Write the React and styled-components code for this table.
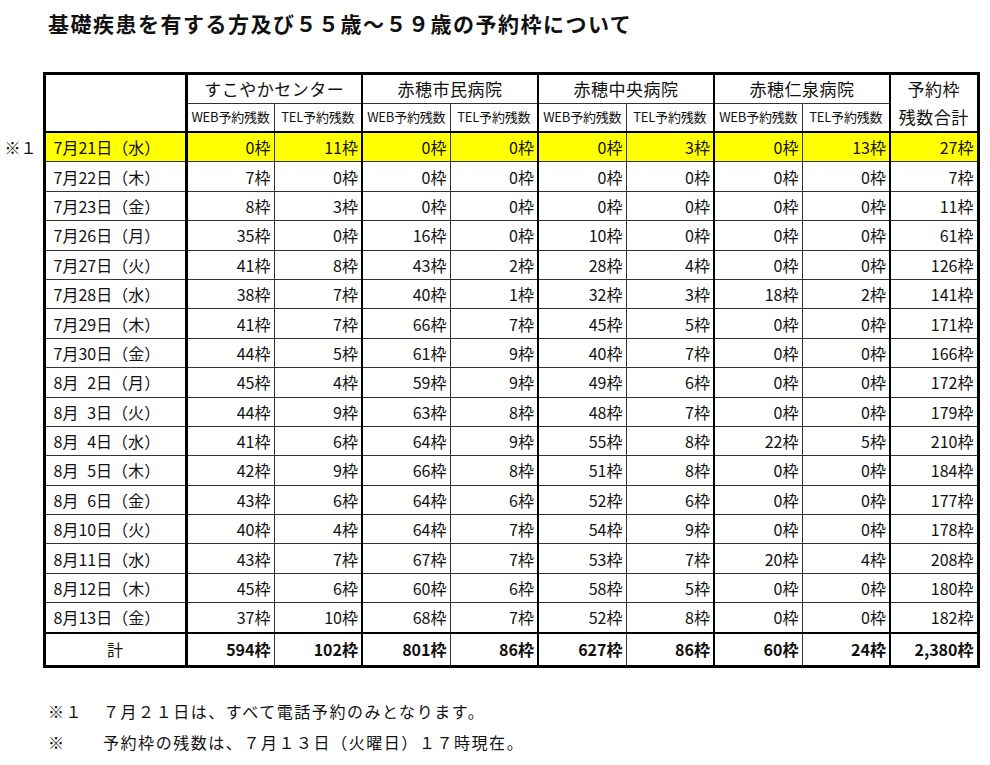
import React from "react";
import styled, { createGlobalStyle } from "styled-components";

const GlobalStyle = createGlobalStyle`
  body {
    margin: 0;
    background: #ffffff;
    color: #111;
    font-family: "Noto Sans CJK JP", "Noto Sans", sans-serif;
  }
`;

const Page = styled.div`
  width: 990px;
  height: 765px;
  padding-top: 11px;
  box-sizing: border-box;
`;

const Title = styled.h1`
  margin: 0 0 36px 48px;
  font-size: 21px;
  line-height: 25px;
  font-weight: 700;
  letter-spacing: 1.5px;
`;

const Table = styled.table`
  border-collapse: collapse;
  table-layout: fixed;
  width: 979px;
`;

const Marker = styled.td`
  border: none;
  font-size: 16px;
  text-align: right;
  padding: 0 6px 0 0;
  white-space: nowrap;
`;

const line = (w) => (w === 1 ? "1px solid #333" : `${w}px solid #000`);

const Cell = styled.td`
  height: ${(p) => p.$h || 28.4}px;
  padding: 0;
  line-height: 20px;
  border-top: ${(p) => line(p.$top || 1)};
  border-bottom: ${(p) => line(p.$bottom || 1)};
  border-left: ${(p) => line(p.$left || 1)};
  border-right: ${(p) => line(p.$right || 1)};
  background: ${(p) => (p.$hl ? "#ffff00" : "#fff")};
  white-space: nowrap;
  overflow: hidden;
`;

const HeadName = styled(Cell)`
  font-size: 17px;
  text-align: center;
  letter-spacing: 0.5px;
`;

const SubHead = styled(Cell)`
  font-size: 13px;
  text-align: center;
  letter-spacing: -0.2px;
`;

const TotalHead = styled(Cell)`
  font-size: 17px;
  line-height: 28px;
  text-align: center;
  letter-spacing: 0.5px;
`;

const DateCell = styled(Cell)`
  font-size: 16px;
  text-align: ${(p) => (p.$center ? "center" : "left")};
  padding-left: ${(p) => (p.$center ? 0 : 8)}px;
`;

const Num = styled(Cell)`
  font-size: 16px;
  text-align: right;
  padding-right: 3px;
  font-weight: ${(p) => (p.$bold ? 700 : 400)};
`;

const Pad = styled.span`
  display: inline-block;
  width: 0.55em;
`;

const Notes = styled.div`
  margin: 28px 0 0 48px;
  font-size: 16px;
  line-height: 31px;
  letter-spacing: 1.55px;
`;

const NoteLine = styled.div`
  display: flex;
`;

const NoteMark = styled.span`
  width: 55px;
  flex-shrink: 0;
`;

const hospitals = ["すこやかセンター", "赤穂市民病院", "赤穂中央病院", "赤穂仁泉病院"];

const rows = [
  ["7", "21", "水", [0, 11, 0, 0, 0, 3, 0, 13, 27]],
  ["7", "22", "木", [7, 0, 0, 0, 0, 0, 0, 0, 7]],
  ["7", "23", "金", [8, 3, 0, 0, 0, 0, 0, 0, 11]],
  ["7", "26", "月", [35, 0, 16, 0, 10, 0, 0, 0, 61]],
  ["7", "27", "火", [41, 8, 43, 2, 28, 4, 0, 0, 126]],
  ["7", "28", "水", [38, 7, 40, 1, 32, 3, 18, 2, 141]],
  ["7", "29", "木", [41, 7, 66, 7, 45, 5, 0, 0, 171]],
  ["7", "30", "金", [44, 5, 61, 9, 40, 7, 0, 0, 166]],
  ["8", "2", "月", [45, 4, 59, 9, 49, 6, 0, 0, 172]],
  ["8", "3", "火", [44, 9, 63, 8, 48, 7, 0, 0, 179]],
  ["8", "4", "水", [41, 6, 64, 9, 55, 8, 22, 5, 210]],
  ["8", "5", "木", [42, 9, 66, 8, 51, 8, 0, 0, 184]],
  ["8", "6", "金", [43, 6, 64, 6, 52, 6, 0, 0, 177]],
  ["8", "10", "火", [40, 4, 64, 7, 54, 9, 0, 0, 178]],
  ["8", "11", "水", [43, 7, 67, 7, 53, 7, 20, 4, 208]],
  ["8", "12", "木", [45, 6, 60, 6, 58, 5, 0, 0, 180]],
  ["8", "13", "金", [37, 10, 68, 7, 52, 8, 0, 0, 182]],
];

const totals = ["594", "102", "801", "86", "627", "86", "60", "24", "2,380"];

// border-left width for data column i (0..8)
const colLeft = (i) => (i === 0 ? 3 : i % 2 === 0 ? 2 : 1);
const colRight = (i) => (i === 8 ? 3 : undefined);

export default function App() {
  return (
    <Page>
      <GlobalStyle />
      <Title>基礎疾患を有する方及び５５歳～５９歳の予約枠について</Title>
      <Table>
        <colgroup>
          <col style={{ width: 44 }} />
          <col style={{ width: 142 }} />
          {Array.from({ length: 9 }).map((_, i) => (
            <col key={i} style={{ width: 88 }} />
          ))}
        </colgroup>
        <thead>
          <tr>
            <Marker rowSpan={2} />
            <DateCell rowSpan={2} $top={3} $left={3} $right={3} $bottom={2} $h={26} />
            {hospitals.map((h, i) => (
              <HeadName key={h} colSpan={2} $top={3} $left={i === 0 ? 3 : 2} $right={2} $h={26}>
                {h}
              </HeadName>
            ))}
            <TotalHead rowSpan={2} $top={3} $left={2} $right={3} $bottom={2} $h={52}>
              予約枠
              <br />
              残数合計
            </TotalHead>
          </tr>
          <tr>
            {hospitals.map((h, i) => (
              <React.Fragment key={h}>
                <SubHead $left={colLeft(i * 2)} $bottom={2} $h={26}>
                  WEB予約残数
                </SubHead>
                <SubHead $left={1} $bottom={2} $h={26}>
                  TEL予約残数
                </SubHead>
              </React.Fragment>
            ))}
          </tr>
        </thead>
        <tbody>
          {rows.map(([m, d, w, vals], r) => {
            const hl = r === 0;
            return (
              <tr key={m + d}>
                <Marker>{hl ? "※１" : ""}</Marker>
                <DateCell $hl={hl} $left={3} $right={3} $top={r === 0 ? 2 : 1}>
                  {m}月{d.length === 1 && <Pad />}
                  {d}日（{w}）
                </DateCell>
                {vals.map((v, i) => (
                  <Num key={i} $hl={hl} $left={colLeft(i)} $right={colRight(i)} $top={r === 0 ? 2 : 1}>
                    {v}枠
                  </Num>
                ))}
              </tr>
            );
          })}
          <tr>
            <Marker />
            <DateCell $center $left={3} $right={3} $top={2} $bottom={3} $h={31}>
              計
            </DateCell>
            {totals.map((v, i) => (
              <Num key={i} $bold $left={colLeft(i)} $right={colRight(i)} $top={2} $bottom={3} $h={31}>
                {v}枠
              </Num>
            ))}
          </tr>
        </tbody>
      </Table>
      <Notes>
        <NoteLine>
          <NoteMark>※１</NoteMark>
          <span>７月２１日は、すべて電話予約のみとなります。</span>
        </NoteLine>
        <NoteLine>
          <NoteMark>※</NoteMark>
          <span>予約枠の残数は、７月１３日（火曜日）１７時現在。</span>
        </NoteLine>
      </Notes>
    </Page>
  );
}
